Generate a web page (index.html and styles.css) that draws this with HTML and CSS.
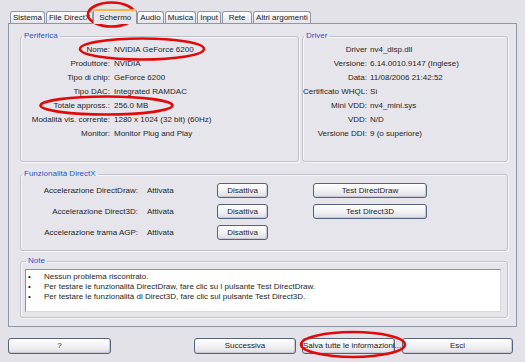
FILE: index.html
```html
<!DOCTYPE html>
<html lang="it">
<head>
    <meta charset="UTF-8">
    <title>Strumento di diagnostica DirectX - Schermo</title>
    <link rel="stylesheet" href="styles.css">
</head>
<body>
    <div class="dialog">
        <ul class="tabs">
            <li>Sistema</li>
            <li>File DirectX</li>
            <li class="active">Schermo</li>
            <li>Audio</li>
            <li>Musica</li>
            <li>Input</li>
            <li class="wide">Rete</li>
            <li>Altri argomenti</li>
        </ul>

        <div class="page">
            <div class="top-row">
                <fieldset class="group">
                    <legend>Periferica</legend>
                    <dl class="props props-device">
                        <dt>Nome:</dt><dd>NVIDIA GeForce 6200</dd>
                        <dt>Produttore:</dt><dd>NVIDIA</dd>
                        <dt>Tipo di chip:</dt><dd>GeForce 6200</dd>
                        <dt>Tipo DAC:</dt><dd>Integrated RAMDAC</dd>
                        <dt>Totale appross.:</dt><dd>256.0 MB</dd>
                        <dt>Modalità vis. corrente:</dt><dd>1280 x 1024 (32 bit) (60Hz)</dd>
                        <dt>Monitor:</dt><dd>Monitor Plug and Play</dd>
                    </dl>
                </fieldset>

                <fieldset class="group">
                    <legend>Driver</legend>
                    <dl class="props props-driver">
                        <dt>Driver</dt><dd>nv4_disp.dll</dd>
                        <dt>Versione:</dt><dd>6.14.0010.9147 (Inglese)</dd>
                        <dt>Data:</dt><dd>11/08/2006 21:42:52</dd>
                        <dt>Certificato WHQL:</dt><dd>Sì</dd>
                        <dt>Mini VDD:</dt><dd>nv4_mini.sys</dd>
                        <dt>VDD:</dt><dd>N/D</dd>
                        <dt>Versione DDI:</dt><dd>9 (o superiore)</dd>
                    </dl>
                </fieldset>
            </div>

            <fieldset class="group group-dx">
                <legend>Funzionalità DirectX</legend>
                <div class="dx-grid">
                    <span class="dx-label">Accelerazione DirectDraw:</span>
                    <span>Attivata</span>
                    <button class="btn btn-small">Disattiva</button>
                    <button class="btn btn-test">Test DirectDraw</button>

                    <span class="dx-label">Accelerazione Direct3D:</span>
                    <span>Attivata</span>
                    <button class="btn btn-small">Disattiva</button>
                    <button class="btn btn-test">Test Direct3D</button>

                    <span class="dx-label">Accelerazione trama AGP:</span>
                    <span>Attivata</span>
                    <button class="btn btn-small">Disattiva</button>
                </div>
            </fieldset>

            <fieldset class="group group-note">
                <legend>Note</legend>
                <ul class="notes">
                    <li>Nessun problema riscontrato.</li>
                    <li>Per testare le funzionalità DirectDraw, fare clic su l pulsante Test DirectDraw.</li>
                    <li>Per testare le funzionalità di Direct3D, fare clic sul pulsante Test Direct3D.</li>
                </ul>
            </fieldset>
        </div>

        <div class="footer">
            <button class="btn btn-help">?</button>
            <button class="btn btn-next">Successiva</button>
            <button class="btn btn-save">Salva tutte le informazioni...</button>
            <button class="btn btn-exit">Esci</button>
        </div>
    </div>

    <!-- red hand-drawn marks over the screenshot -->
    <svg class="marks" width="525" height="362" viewBox="0 0 525 362">
        <ellipse cx="111.5" cy="14.5" rx="23.5" ry="12" />
        <ellipse cx="142" cy="49" rx="62" ry="10.5" />
        <ellipse cx="106.5" cy="105.5" rx="66" ry="9" />
        <ellipse cx="353" cy="344.5" rx="52" ry="12.5" />
    </svg>
</body>
</html>
```

FILE: styles.css
```css
:root {
    --face: #e3e2e8;
    --page: #e6e5eb;
    --text: #1e1e1e;
    --legend: #2852c8;
    --group-border: #c2c2cb;
    --tab-border: #8e97a6;
    --btn-border: #56637e;
}

* {
    margin: 0;
    padding: 0;
    box-sizing: border-box;
    font-family: 'Liberation Sans', Arial, sans-serif;
}

body {
    background-color: var(--face);
    color: var(--text);
    font-size: 8px;
    line-height: 10px;
    width: 525px;
    height: 362px;
    overflow: hidden;
}

.dialog {
    padding: 0 8px;
}

/* Tabs */
.tabs {
    list-style: none;
    display: flex;
    align-items: flex-end;
    gap: 1px;
    padding: 9px 0 0 2px;
}

.tabs li {
    flex-shrink: 0;
    min-width: 24px;
    height: 12px;
    padding: 0 2px;
    line-height: 11px;
    text-align: center;
    white-space: nowrap;
    border: 1px solid var(--tab-border);
    border-bottom: none;
    border-radius: 3px 3px 0 0;
    background: linear-gradient(#ffffff, #eeeef2 60%, #e4e4ea);
}

.tabs li.wide {
    min-width: 30px;
}

.tabs li.active {
    height: 15px;
    margin: 0 -1px -1px;
    padding: 0 5px;
    line-height: 13px;
    background: var(--page);
    border-top: 2px solid #f3b548;
    position: relative;
    z-index: 1;
}

/* Tab page */
.page {
    background-color: var(--page);
    border: 1px solid var(--tab-border);
    padding: 7px 8px 8px 11px;
}

.top-row {
    display: grid;
    grid-template-columns: 279px 1fr;
    gap: 3px;
}

.group {
    border: 1px solid var(--group-border);
    border-radius: 3px;
    box-shadow: inset 1px 1px 0 #f6f6f9, 1px 1px 0 #f6f6f9;
    padding: 0;
    margin: 0;
    min-width: 0;
}

.group legend {
    color: var(--legend);
    line-height: 10px;
    padding: 0 2px;
    margin-left: 1px;
}

.props {
    display: grid;
    line-height: 14px;
    padding: 2px 0 20px;
}

.props-device {
    grid-template-columns: 89px 1fr;
    column-gap: 4px;
}

.props-driver {
    grid-template-columns: 64px 1fr;
    column-gap: 3px;
}

.props dt {
    text-align: right;
    white-space: nowrap;
}

.props dd {
    white-space: nowrap;
}

/* DirectX features */
.group-dx {
    margin-top: 7px;
}

.dx-grid {
    display: grid;
    grid-template-columns: 126px 70px 96px 114px;
    row-gap: 6px;
    align-items: center;
    padding: 4px 0 10px;
}

.dx-label {
    text-align: right;
    padding-right: 9px;
    white-space: nowrap;
}

/* Buttons */
.btn {
    display: block;
    height: 15px;
    font-size: 8px;
    line-height: 13px;
    color: var(--text);
    text-align: center;
    white-space: nowrap;
    border: 1px solid var(--btn-border);
    border-radius: 3px;
    background: linear-gradient(#ffffff, #f2f2f5 50%, #dcdce4);
    box-shadow: inset -1px -1px 0 #c9c9d4;
    cursor: pointer;
}

.btn-small {
    width: 51px;
}

.btn-test {
    width: 114px;
}

/* Notes */
.group-note {
    margin-top: 5px;
    padding: 3px 6px 5px 4px;
}

.notes {
    list-style: none;
    background: #ffffff;
    border: 1px solid #8f8f9c;
    border-right-color: #d8d8de;
    border-bottom-color: #d8d8de;
    padding: 2px 2px 9px;
}

.notes li {
    line-height: 10px;
    white-space: nowrap;
}

.notes li::before {
    content: "•";
    display: inline-block;
    width: 16px;
}

/* Footer */
.footer {
    display: flex;
    margin-top: 11px;
    padding-right: 4px;
}

.footer .btn {
    height: 16px;
    line-height: 14px;
}

.btn-help {
    width: 103px;
    margin-right: auto;
}

.btn-next {
    width: 102px;
}

.btn-save {
    width: 93px;
    margin-left: 6px;
}

.btn-exit {
    width: 111px;
    margin-left: 7px;
}

/* Annotation overlay */
.marks {
    position: absolute;
    top: 0;
    left: 0;
    pointer-events: none;
}

.marks ellipse {
    fill: none;
    stroke: #e10a0a;
    stroke-width: 2.6;
}
```
